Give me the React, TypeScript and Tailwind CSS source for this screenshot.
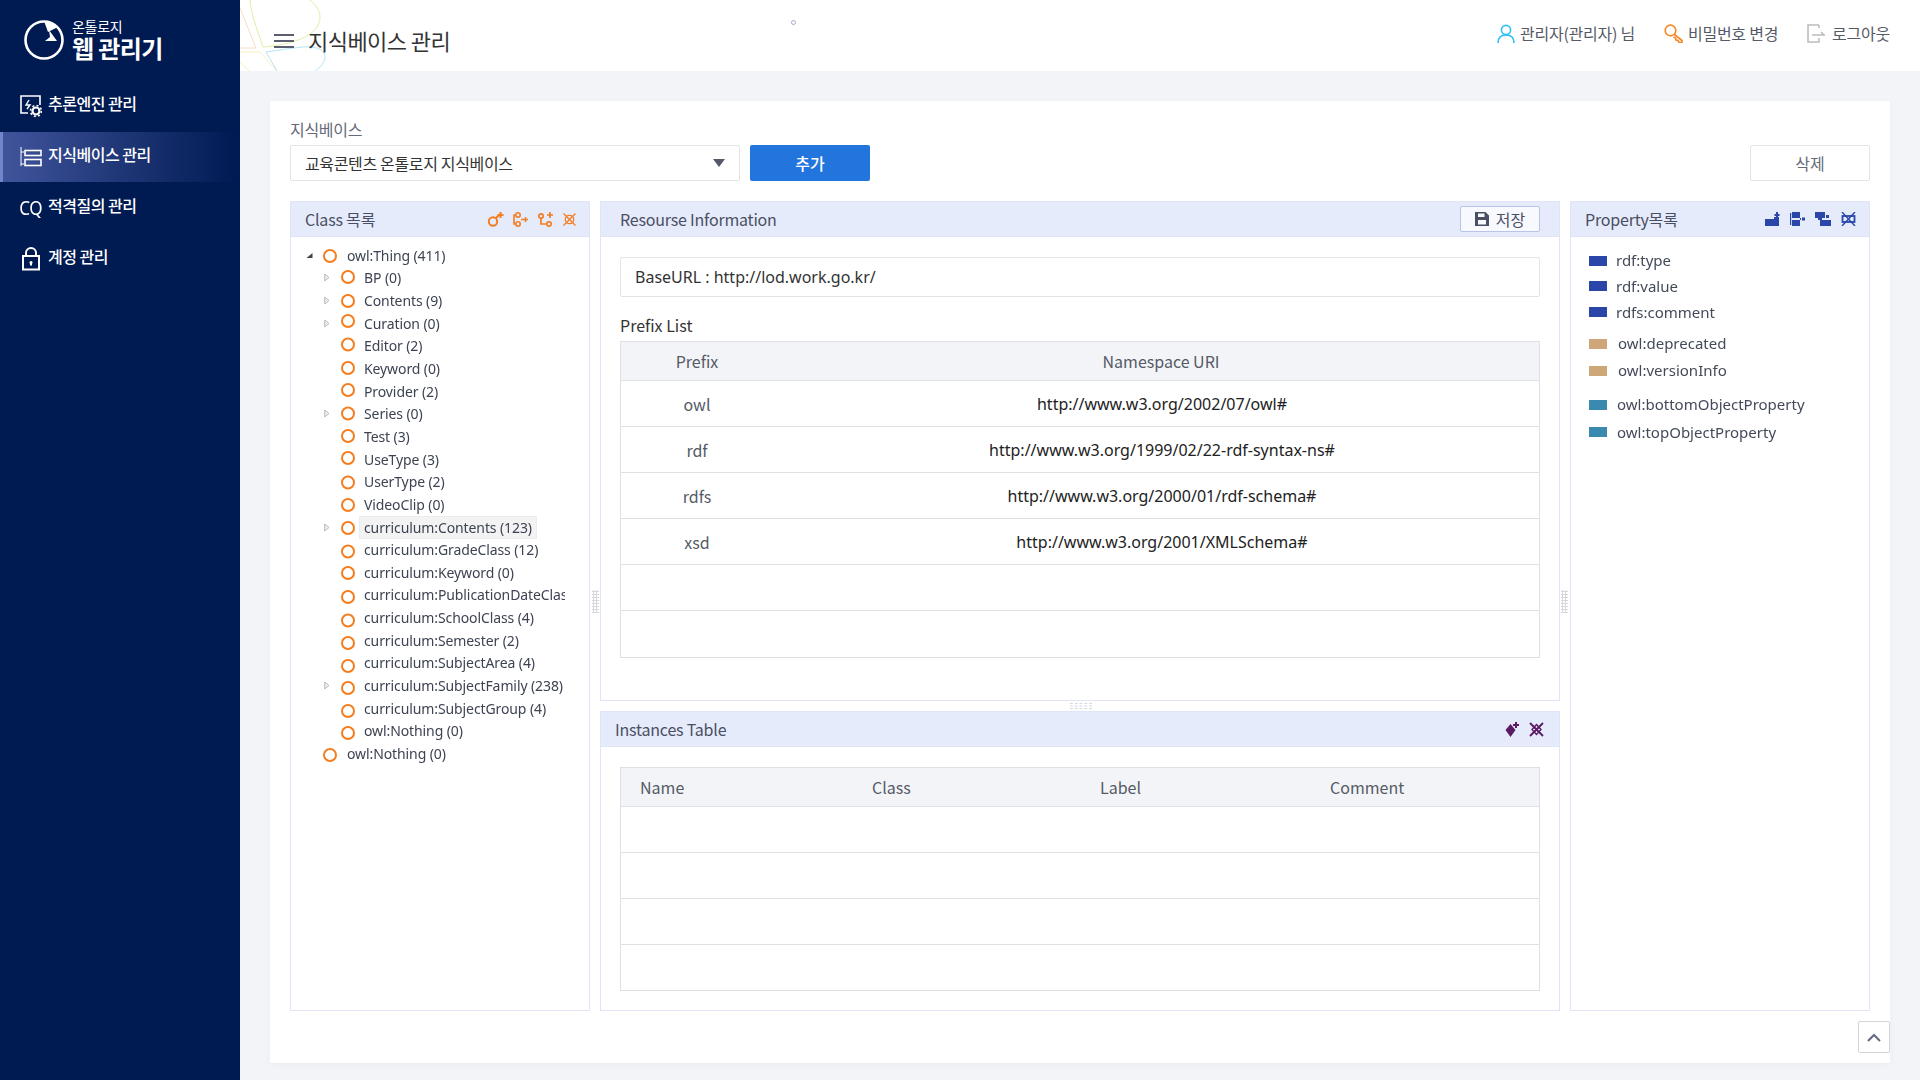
import React from "react";

const sans = "font-['Noto_Sans_CJK_KR','Noto_Sans',sans-serif]";

type Row = { t: string; root?: boolean; arrow?: "open" | "closed"; dy: number; sel?: boolean };
const rows: Row[] = [
  { t: "owl:Thing (411)", root: true, arrow: "open", dy: 1 },
  { t: "BP (0)", arrow: "closed", dy: -1 },
  { t: "Contents (9)", arrow: "closed", dy: 0 },
  { t: "Curation (0)", arrow: "closed", dy: -2 },
  { t: "Editor (2)", dy: -1.5 },
  { t: "Keyword (0)", dy: -1 },
  { t: "Provider (2)", dy: -1 },
  { t: "Series (0)", arrow: "closed", dy: -0.5 },
  { t: "Test (3)", dy: 0 },
  { t: "UseType (3)", dy: -1 },
  { t: "UserType (2)", dy: 0.5 },
  { t: "VideoClip (0)", dy: 1 },
  { t: "curriculum:Contents (123)", arrow: "closed", dy: 1, sel: true },
  { t: "curriculum:GradeClass (12)", dy: 1.5 },
  { t: "curriculum:Keyword (0)", dy: 1 },
  { t: "curriculum:PublicationDateClass (3)", dy: 2 },
  { t: "curriculum:SchoolClass (4)", dy: 2.5 },
  { t: "curriculum:Semester (2)", dy: 3 },
  { t: "curriculum:SubjectArea (4)", dy: 3 },
  { t: "curriculum:SubjectFamily (238)", arrow: "closed", dy: 3 },
  { t: "curriculum:SubjectGroup (4)", dy: 3 },
  { t: "owl:Nothing (0)", dy: 2 },
  { t: "owl:Nothing (0)", root: true, dy: 2 },
];

const Ring = ({ dy }: { dy: number }) => (
  <span
    className="block w-[14px] h-[14px] rounded-full border-2 border-[#f47d20] shrink-0"
    style={{ transform: `translateY(${dy}px)` }}
  />
);

const TreeRow = ({ r }: { r: Row }) => (
  <div className={`flex items-center h-[22.65px] ${r.root ? "pl-[15px]" : "pl-[33px]"}`}>
    <span className="w-[8px] h-[10px] flex items-center shrink-0">
      {r.arrow === "open" && (
        <svg width="7" height="7" viewBox="0 0 7 7"><path d="M6.5 1v5h-6z" fill="#444" /></svg>
      )}
      {r.arrow === "closed" && (
        <svg width="6" height="9" viewBox="0 0 6 9"><path d="M.7 1l4.3 3.5-4.3 3.5z" fill="#eee" stroke="#bbb" /></svg>
      )}
    </span>
    <span className={r.root ? "ml-[9px]" : "ml-[9px]"}><Ring dy={r.dy} /></span>
    <span
      className={`${r.root ? "ml-[5px]" : "ml-[4px]"} h-[23px] leading-[21px] pl-[4px] pr-[4px] whitespace-nowrap border ${
        r.sel ? "bg-[#f3f3f3] border-[#ececec]" : "border-transparent"
      } text-[14px] tracking-[-0.1px] text-[#3d4352] [filter:blur(0.45px)] font-['Noto_Sans',sans-serif]`}
    >
      {r.t}
    </span>
  </div>
);

const PanelHeader = ({ title, right, className = "" }: { title: string; right?: React.ReactNode; className?: string }) => (
  <div className={`h-[35px] shrink-0 bg-[#e5ebfb] border-b border-[#dfe5f6] flex items-center justify-between ${className}`}>
    <span className="text-[16px] tracking-[-0.2px] text-[#4a4f63]">{title}</span>
    {right}
  </div>
);

const Orange = () => (
  <div className="flex items-center gap-[9px]">
    <svg width="17" height="15" viewBox="0 0 17 15" fill="none" stroke="#f47d20" strokeWidth="2">
      <circle cx="6" cy="9.5" r="4.2" /><path d="M9 6l3-3M13.5 0v6M10.5 3h6" />
    </svg>
    <svg width="16" height="15" viewBox="0 0 16 15" fill="none" stroke="#f47d20" strokeWidth="1.6">
      <circle cx="5" cy="3" r="2.2" /><circle cx="5" cy="12" r="2.2" /><path d="M2.5 3H1v9h1.5M8 7.5h2M12.5 5v5M10 7.5h5" />
    </svg>
    <svg width="16" height="15" viewBox="0 0 16 15" fill="none" stroke="#f47d20" strokeWidth="1.7">
      <circle cx="3" cy="4" r="2.2" /><circle cx="11" cy="12" r="2.2" /><path d="M3 6.5V12h6M12 0v6M9 3h6" />
    </svg>
    <svg width="13" height="13" viewBox="0 0 13 13" fill="none" stroke="#f47d20" strokeWidth="1.3">
      <circle cx="6.5" cy="6.5" r="4.2" /><path d="M0.5 0.5l12 12M12.5 0.5l-12 12" />
    </svg>
  </div>
);

const Blue = () => (
  <div className="flex items-center gap-[10px]">
    <svg width="15" height="14" viewBox="0 0 15 14" fill="#2a46a8"><path d="M0 7h9V5h5v9H0z" /><path d="M11 0h2v6h-2zM9.5 2h5v2h-5z" /></svg>
    <svg width="15" height="14" viewBox="0 0 15 14" fill="#2a46a8"><path d="M2 0h8v6H2zM2 8h8v6H2zM0 1h1.2v12H0zM10 6h1v2h-1zM12 5.5h3v3h-3z" /></svg>
    <svg width="16" height="14" viewBox="0 0 16 14" fill="#2a46a8"><path d="M0 0h10v6H7v2H3V6H0zM5 8h11v6H5zM11 3h3v3h-3z" /></svg>
    <svg width="15" height="14" viewBox="0 0 15 14" fill="none" stroke="#2a46a8" strokeWidth="1.4"><path d="M1 0l13 14M14 0L1 14" /><rect x="1.5" y="4" width="12" height="6" strokeWidth="1.8" /></svg>
  </div>
);

const PropRow = ({ c, t, h, ml }: { c: string; t: string; h: number; ml: number }) => (
  <div className="flex items-center" style={{ height: h }}>
    <span className="w-[18px] h-[10px] shrink-0" style={{ background: c }} />
    <span className="text-[15px] text-[#444a5a] [filter:blur(0.45px)] font-['Noto_Sans',sans-serif]" style={{ marginLeft: ml }}>{t}</span>
  </div>
);

const tableRows = [
  ["owl", "http://www.w3.org/2002/07/owl#"],
  ["rdf", "http://www.w3.org/1999/02/22-rdf-syntax-ns#"],
  ["rdfs", "http://www.w3.org/2000/01/rdf-schema#"],
  ["xsd", "http://www.w3.org/2001/XMLSchema#"],
  ["", ""],
  ["", ""],
];

const Menu = ({ icon, label, active }: { icon: React.ReactNode; label: string; active?: boolean }) => (
  <div
    className={`h-[50px] flex items-center pl-[20px] gap-[6px] ${
      active ? "border-l-[3px] border-[#6f86c8] !pl-[17px] bg-gradient-to-r from-[#40549c] to-[#001a52]" : ""
    }`}
  >
    <span className="w-[22px] h-[24px] flex items-center justify-center shrink-0">{icon}</span>
    <span className="mb-[6px] text-[16px] font-medium text-white tracking-[-0.5px]">{label}</span>
  </div>
);

export default function App() {
  return (
    <div className={`flex w-[1920px] h-[1080px] overflow-hidden bg-[#f3f4f8] ${sans}`}>
      <aside className="w-[240px] shrink-0 bg-[#001a52] text-white">
        <div className="h-[80px] flex items-start pl-[24px] pt-[18px] gap-[8px]">
          <svg width="40" height="40" viewBox="0 0 40 40" className="mt-[2px]" fill="none">
            <circle cx="20" cy="20" r="18.5" stroke="#fff" strokeWidth="2.6" />
            <path d="M20 1a19 19 0 0 1 14 6l-10 5z" fill="#fff" />
            <path d="M21 21l5-4-1-7 8 11z" fill="#fff" />
          </svg>
          <div className="flex flex-col">
            <span className="text-[14px] leading-[16px] tracking-[-0.3px]">온톨로지</span>
            <span className="text-[24px] leading-[28px] font-bold tracking-[-0.6px]">웹 관리기</span>
          </div>
        </div>
        <nav className="mt-[1px] flex flex-col gap-[1px]">
          <Menu
            label="추론엔진 관리"
            icon={
              <svg width="22" height="26" viewBox="0 0 22 26" fill="none" stroke="#fff" strokeWidth="1.6">
                <path d="M8 20H1V3h19v9" /><path d="M9 7l-3 5h4l-3 4" strokeWidth="1.4" />
                <circle cx="16" cy="18" r="3.5" strokeWidth="2.2" /><circle cx="16" cy="18" r="5.5" strokeDasharray="2 2.3" strokeWidth="1.6" />
              </svg>
            }
          />
          <Menu
            active
            label="지식베이스 관리"
            icon={
              <svg width="22" height="20" viewBox="0 0 22 20" fill="none" stroke="#fff" strokeWidth="1.6">
                <path d="M1 0v19" strokeWidth="1" /><path d="M1 5h3M1 17h3" strokeWidth="1" />
                <rect x="5" y="3.5" width="16" height="5" /><rect x="5" y="12.5" width="16" height="6" />
              </svg>
            }
          />
          <Menu label="적격질의 관리" icon={<span className="text-[19px] leading-none tracking-[-0.5px] font-['Noto_Sans',sans-serif] scale-x-90">CQ</span>} />
          <Menu
            label="계정 관리"
            icon={
              <svg width="20" height="24" viewBox="0 0 20 24" fill="none" stroke="#fff" strokeWidth="2">
                <rect x="2" y="9" width="16" height="13.5" /><path d="M5 9V6a5 5 0 0 1 10 0v3" />
                <circle cx="10" cy="15.5" r="1.5" fill="#fff" stroke="none" /><path d="M10 15.5v3" />
              </svg>
            }
          />
        </nav>
      </aside>

      <div className="flex-1 flex flex-col min-w-0">
        <header className="h-[71px] shrink-0 bg-white flex items-center relative overflow-hidden pl-[34px] pr-[30px] pt-[10px]">
          <svg className="absolute left-0 top-0" width="110" height="71" viewBox="0 0 110 71" fill="none" strokeWidth="1">
            <path d="M10 0c1 14 6 26 13 47 26-2 57-10 57-30 0-6-4-12-10-17" stroke="#dff0a8" />
            <path d="M0 8l16 40H0" stroke="#fcdcc4" />
            <path d="M0 52h20l17 19M0 62l9 9" stroke="#fbf0b8" />
            <path d="M37 71L26 52c14-2 26-4 37-5 12-1 22 2 22 10 0 5-4 10-10 14" stroke="#b4e6fa" />
          </svg>
          <span className="absolute left-[551px] top-[20px] w-[5px] h-[5px] rounded-full border border-[#a9a6d0]" />
          <svg className="relative" width="20" height="14" viewBox="0 0 20 14" stroke="#5a5e70" strokeWidth="2">
            <path d="M0 1h20M0 7h20M0 13h20" />
          </svg>
          <h1 className="relative ml-[14px] text-[22px] font-normal tracking-[-0.55px] text-[#333]">지식베이스 관리</h1>
          <div className="ml-auto mb-[15px] flex items-center text-[16px] tracking-[-0.25px] text-[#555a66]">
            <svg width="18" height="19" viewBox="0 0 18 19" fill="none" stroke="#2cc0f5" strokeWidth="1.6">
              <circle cx="9" cy="6" r="4.6" /><path d="M1 19c0-5 3-8 8-8s8 3 8 8" />
            </svg>
            <span className="ml-[5px]">관리자(관리자) 님</span>
            <svg className="ml-[29px]" width="19" height="19" viewBox="0 0 19 19" fill="none" stroke="#f58a2b" strokeWidth="1.7">
              <circle cx="6.5" cy="6.5" r="5.3" /><path d="M10.5 10.5l7.5 6v2h-3l-1-2-2-.5-.5-2-2-1" />
            </svg>
            <span className="ml-[5px]">비밀번호 변경</span>
            <svg className="ml-[29px]" width="18" height="19" viewBox="0 0 18 19" fill="none" stroke="#bdbdbd" strokeWidth="1.6">
              <path d="M12 1H1v17h11v-4M12 1v3M5 11h12l-3-3" />
            </svg>
            <span className="ml-[7px]">로그아웃</span>
          </div>
        </header>

        <main className="flex-1 pl-[30px] pr-[30px] pt-[30px] relative">
          <section className="relative h-[962px] bg-white px-[20px] pt-[16px] shadow-[0_2px_8px_rgba(0,0,0,0.03)]">
            <div className="mb-[4px] text-[16px] leading-[24px] tracking-[-0.3px] text-[#666a78]">지식베이스</div>
            <div className="flex items-center">
              <div className="w-[450px] h-[36px] border border-[#e2e3e8] rounded-[2px] flex items-center justify-between pl-[14px] pr-[14px]">
                <span className="text-[16px] tracking-[-0.35px] text-[#333]">교육콘텐츠 온톨로지 지식베이스</span>
                <svg width="12" height="8" viewBox="0 0 12 8"><path d="M0 0h12L6 8z" fill="#555a6a" /></svg>
              </div>
              <button className="ml-[10px] w-[120px] h-[36px] bg-[#2375de] text-white text-[16px] font-medium rounded-[2px]">추가</button>
              <button className="ml-auto w-[120px] h-[36px] bg-white border border-[#e2e3e8] rounded-[2px] text-[16px] text-[#666a78]">삭제</button>
            </div>

            <div className="mt-[20px] flex gap-[10px] h-[810px]">
              {/* Class */}
              <div className="w-[300px] shrink-0 border border-[#dfe5f6] flex flex-col">
                <PanelHeader title="Class 목록" className="pl-[14px] pr-[13px]" right={<Orange />} />
                <div className="w-[274px] overflow-hidden pt-[7px]">
                  {rows.map((r, i) => <TreeRow key={i} r={r} />)}
                </div>
              </div>

              {/* Middle */}
              <div className="relative w-[960px] shrink-0 flex flex-col gap-[10px]">
                <div className="h-[500px] border border-[#dfe5f6] flex flex-col">
                  <PanelHeader
                    title="Resourse Information"
                    className="pl-[19px] pr-[19px]"
                    right={
                      <button className="w-[80px] h-[26px] bg-[#f7f9ff] border border-[#b9c4e6] rounded-[2px] flex items-center justify-center gap-[7px] text-[16px] text-[#4a4f63]">
                        <svg width="14" height="14" viewBox="0 0 14 14">
                          <path fillRule="evenodd" d="M0 0h10.5L14 3.5V14H0zM3 1.5v3.5h6.5V1.5zM3 8v4.5h8V8z" fill="#4a4f63" />
                        </svg>
                        저장
                      </button>
                    }
                  />
                  <div className="px-[19px] pt-[20px]">
                    <div className="h-[40px] border border-[#e2e3e8] rounded-[2px] flex items-center pl-[14px] text-[16px] text-[#333] font-['Noto_Sans',sans-serif]">BaseURL : http://lod.work.go.kr/</div>
                    <div className="mt-[17px] h-[27px] text-[16px] leading-[22px] text-[#333]">Prefix List</div>
                    <div className="border border-[#dfe0e6]">
                      <div className="h-[39px] bg-[#f3f4f8] border-b border-[#dfe0e6] grid grid-cols-[152px_1fr] items-center text-[16px] text-[#555a66] text-center">
                        <span>Prefix</span><span className="pl-[10px]">Namespace URI</span>
                      </div>
                      {tableRows.map(([a, b], i) => (
                        <div key={i} className="h-[46px] border-b border-[#dfe0e6] last:border-b-0 grid grid-cols-[152px_1fr] items-center text-center text-[16px]">
                          <span className="text-[#555a66]">{a}</span>
                          <span className="pl-[12px] text-[#222] font-['Noto_Sans',sans-serif]">{b}</span>
                        </div>
                      ))}
                    </div>
                  </div>
                </div>
                <div className="flex-1 border border-[#dfe5f6] flex flex-col">
                  <PanelHeader
                    title="Instances Table"
                    className="pl-[14px] pr-[15px]"
                    right={
                      <div className="flex items-center gap-[9px]">
                        <svg width="15" height="15" viewBox="0 0 15 15" fill="#5b1a63"><path d="M5.5 2l5 6-5 7-5-7z" /><path d="M10 0h2v6h-2zM8 2h6v2H8z" /></svg>
                        <svg width="15" height="15" viewBox="0 0 15 15" fill="none" stroke="#5b1a63" strokeWidth="1.8"><path d="M1 1l13 13M14 1L1 14" /><path d="M7.5 2.5l4.5 5-4.5 5-4.5-5z" strokeWidth="1.4" /></svg>
                      </div>
                    }
                  />
                  <div className="px-[19px] pt-[20px]">
                    <div className="border border-[#dfe0e6] border-b-0">
                      <div className="h-[39px] bg-[#f3f4f8] border-b border-[#dfe0e6] grid grid-cols-[232px_228px_230px_1fr] items-center text-[16px] text-[#555a66]">
                        {["Name", "Class", "Label", "Comment"].map((h) => <span key={h} className="pl-[19px]">{h}</span>)}
                      </div>
                      {[0, 1, 2, 3].map((i) => <div key={i} className="h-[46px] border-b border-[#dfe0e6]" />)}
                    </div>
                  </div>
                </div>
                <span className="absolute left-[-8px] top-[389px] w-[7px] h-[23px] bg-[radial-gradient(#d5d7dd_1px,transparent_1.3px)] bg-[length:3px_3px]" />
                <span className="absolute right-[-8px] top-[389px] w-[7px] h-[23px] bg-[radial-gradient(#d5d7dd_1px,transparent_1.3px)] bg-[length:3px_3px]" />
                <span className="absolute left-[469px] top-[501px] w-[24px] h-[8px] bg-[radial-gradient(#cfd1da_1.1px,transparent_1.4px)] bg-[length:4.8px_2.7px]" />
              </div>

              {/* Property */}
              <div className="flex-1 border border-[#dfe5f6] flex flex-col">
                <PanelHeader title="Property목록" className="pl-[14px] pr-[13px]" right={<Blue />} />
                <div className="pl-[18px] pt-[11px]">
                  <PropRow c="#2a46a8" t="rdf:type" h={25} ml={9} />
                  <PropRow c="#2a46a8" t="rdf:value" h={26} ml={9} />
                  <PropRow c="#2a46a8" t="rdfs:comment" h={26} ml={9} />
                  <div className="h-[5px]" />
                  <PropRow c="#cda777" t="owl:deprecated" h={27} ml={11} />
                  <PropRow c="#cda777" t="owl:versionInfo" h={27} ml={11} />
                  <div className="h-[7px]" />
                  <PropRow c="#3a8ab0" t="owl:bottomObjectProperty" h={27} ml={10} />
                  <PropRow c="#3a8ab0" t="owl:topObjectProperty" h={28} ml={10} />
                </div>
              </div>
            </div>
            <button className="absolute right-0 top-[920px] w-[32px] h-[32px] bg-white border border-[#d3d4dc] rounded-[2px] flex items-center justify-center">
              <svg width="14" height="9" viewBox="0 0 14 9" fill="none" stroke="#666a80" strokeWidth="2"><path d="M1 8l6-6 6 6" /></svg>
            </button>
          </section>
        </main>
      </div>
    </div>
  );
}
